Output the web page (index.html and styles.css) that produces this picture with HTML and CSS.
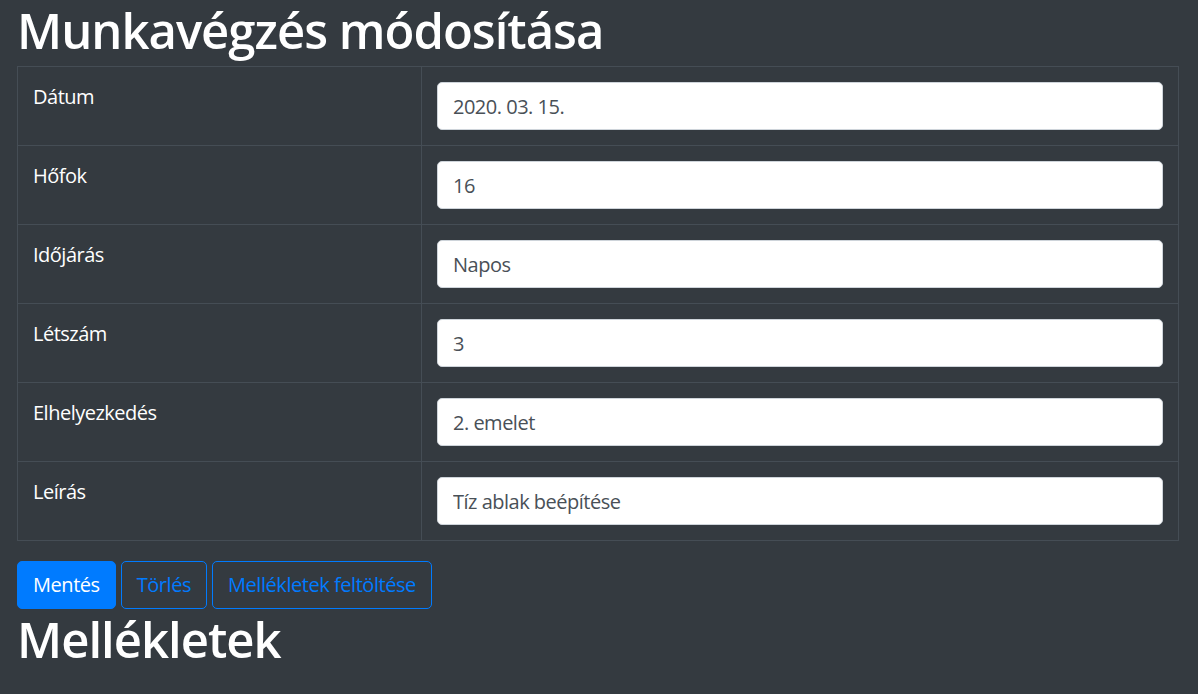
FILE: index.html
```html
<!DOCTYPE html>
<html lang="hu">
<head>
<meta charset="utf-8">
<title>Munkavégzés módosítása</title>
<link rel="stylesheet" href="styles.css">
</head>
<body>
<main class="page">
  <h1 class="title">Munkavégzés módosítása</h1>
  <table class="form-table">
    <colgroup><col class="col-label"><col></colgroup>
    <tbody>
      <tr><td class="label">Dátum</td><td><input class="field" type="text" value="2020. 03. 15."></td></tr>
      <tr><td class="label">Hőfok</td><td><input class="field" type="text" value="16"></td></tr>
      <tr><td class="label">Időjárás</td><td><input class="field" type="text" value="Napos"></td></tr>
      <tr><td class="label">Létszám</td><td><input class="field" type="text" value="3"></td></tr>
      <tr><td class="label">Elhelyezkedés</td><td><input class="field" type="text" value="2. emelet"></td></tr>
      <tr><td class="label">Leírás</td><td><input class="field" type="text" value="Tíz ablak beépítése"></td></tr>
    </tbody>
  </table>
  <div class="actions">
    <button class="btn btn-primary" type="button">Mentés</button>
    <button class="btn btn-outline" type="button">Törlés</button>
    <button class="btn btn-outline" type="button">Mellékletek feltöltése</button>
  </div>
  <h1 class="title title-second">Mellékletek</h1>
</main>
</body>
</html>
```
FILE: styles.css
```css
* { box-sizing: border-box; }
html, body {
  margin: 0;
  padding: 0;
  background: #343a40;
  height: 100%;
}
body {
  font-family: "Open Sans", "Noto Sans", sans-serif;
  font-size: 20px;
  line-height: 1.5;
  letter-spacing: -0.5px;
  color: #fff;
  overflow: hidden;
}
.page {
  padding: 0 19px 0 17px;
}
.title {
  margin: 0 0 6px 0;
  font-size: 49px;
  font-weight: 600;
  line-height: 60px;
  letter-spacing: -1px;
  color: #fff;
}
.form-table {
  width: 100%;
  border-collapse: collapse;
  table-layout: fixed;
}
.col-label { width: 404px; }
.form-table td {
  border: 1px solid #454d55;
  padding: 15px;
  vertical-align: top;
}
.label {
  font-size: 20px;
  line-height: 30px;
  padding-top: 16px;
}
.field {
  display: block;
  width: 100%;
  height: 48px;
  padding: 7px 15px;
  font-family: inherit;
  font-size: 20px;
  line-height: 30px;
  letter-spacing: -0.5px;
  color: #495057;
  background: #fff;
  border: 1px solid #ced4da;
  border-radius: 5px;
}
.actions {
  display: flex;
  gap: 5px;
  margin-top: 20px;
}
.btn {
  height: 48px;
  padding: 0 15px;
  font-family: inherit;
  font-size: 20px;
  line-height: 30px;
  letter-spacing: -0.45px;
  border-radius: 5px;
  border: 1px solid #007bff;
  cursor: pointer;
}
.btn-primary {
  background: #007bff;
  color: #fff;
}
.btn-outline {
  background: transparent;
  color: #007bff;
}
.title-second {
  margin-top: 0;
}
```
